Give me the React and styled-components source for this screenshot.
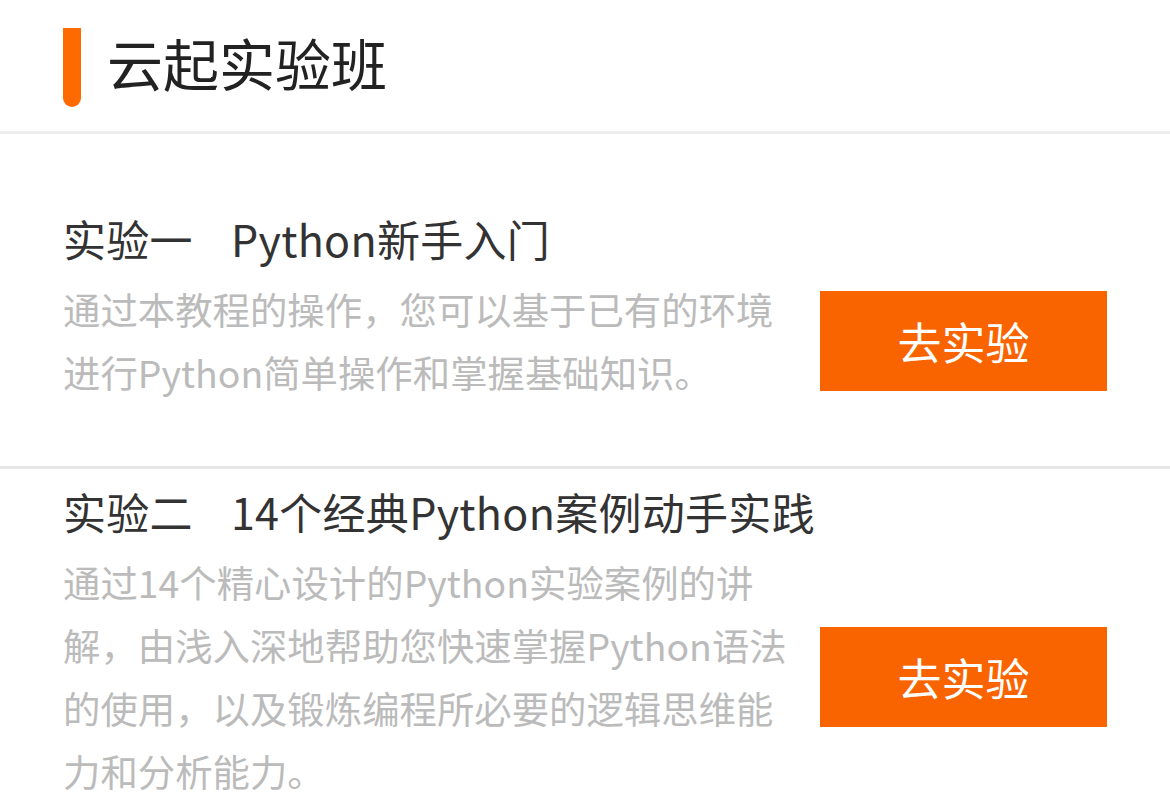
import React from 'react'
import styled, { createGlobalStyle } from 'styled-components'

const Global = createGlobalStyle`
body {
    margin: 0;
    background: #fff;
    font-family: "Noto Sans CJK SC", "Noto Sans", sans-serif;
}
`

const labs = [
    {
        no: '实验一',
        name: 'Python新手入门',
        desc: '通过本教程的操作，您可以基于已有的环境进行Python简单操作和掌握基础知识。',
    },
    {
        no: '实验二',
        name: '14个经典Python案例动手实践',
        desc: '通过14个精心设计的Python实验案例的讲解，由浅入深地帮助您快速掌握Python语法的使用，以及锻炼编程所必要的逻辑思维能力和分析能力。',
    },
]

export default function App() {
    return (
        <Page>
            <Global />
            <Header>
                <Bar />
                <Heading>云起实验班</Heading>
            </Header>
            {labs.map((lab, i) => (
                <Lab key={lab.no} first={i === 0}>
                    <LabTitle>
                        <span>{lab.no}</span>
                        {lab.name}
                    </LabTitle>
                    <Row>
                        <Desc>{lab.desc}</Desc>
                        <Button>去实验</Button>
                    </Row>
                </Lab>
            ))}
        </Page>
    )
}

const Page = styled.div`
width: 100%;
`
const Header = styled.div`
display: flex;
align-items: center;
height: 134px;
padding-left: 63px;
border-bottom: 3px solid #eeeeee;
box-sizing: border-box;
`
const Bar = styled.div`
width: 18px;
height: 79px;
background-color: #ff6a00;
border-radius: 0 0 9px 9px;
margin-top: 4px;
`
const Heading = styled.h1`
margin: -8px 0 0 26px;
font-size: 56px;
font-weight: 400;
color: #222;
line-height: 1;
`
const Lab = styled.div`
padding: ${(p) => (p.first ? '74px' : '12px')} 63px ${(p) => (p.first ? '62px' : '0')} 63px;
border-bottom: ${(p) => (p.first ? '3px solid #e6e6e6' : 'none')};
`
const LabTitle = styled.div`
font-size: 43px;
line-height: 60px;
color: #333;
letter-spacing: 0.3px;
span{
    margin-right: 38px;
}
`
const Row = styled.div`
display: flex;
align-items: center;
justify-content: space-between;
margin-top: 10px;
`
const Desc = styled.div`
width: 725px;
font-size: 37.4px;
line-height: 63px;
color: #bbbbbb;
`
const Button = styled.div`
width: 287px;
height: 100px;
flex-shrink: 0;
background-color: #fa6400;
color: #fff;
font-size: 44px;
display: flex;
align-items: center;
justify-content: center;
`
